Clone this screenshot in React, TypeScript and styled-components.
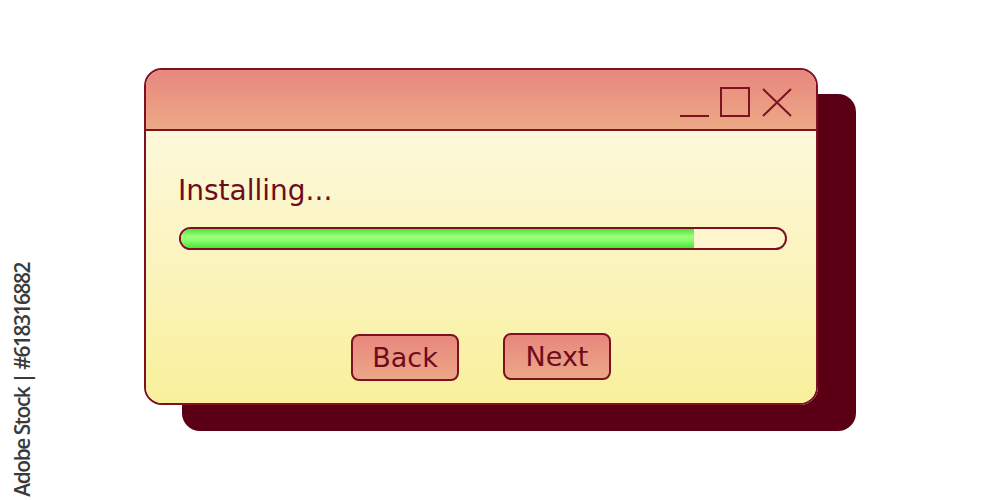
import styled, { createGlobalStyle } from "styled-components";

const GlobalStyle = createGlobalStyle`
  html, body {
    margin: 0;
    padding: 0;
    background: #ffffff;
    overflow: hidden;
  }
  body {
    font-family: "DejaVu Sans", Verdana, sans-serif;
  }
`;

const ink = "#6e0b1e";
const line = "#7d1122";

function App() {
  const progress = 85;

  return (
    <>
      <GlobalStyle />
      <Page>
        <Window>
          <TitleBar>
            <Controls>
              <ControlIcon viewBox="0 0 30 30" aria-label="minimize">
                <path d="M0 29 H29" />
              </ControlIcon>
              <ControlIcon viewBox="0 0 30 30" aria-label="maximize">
                <rect x="1" y="1" width="28" height="28" />
              </ControlIcon>
              <ControlIcon viewBox="0 0 30 30" aria-label="close" $wide>
                <path d="M1 2 L29 29 M29 2 L1 29" />
              </ControlIcon>
            </Controls>
          </TitleBar>
          <Body>
            <Label>Installing...</Label>
            <Track>
              <Fill style={{ width: `${progress}%` }} />
            </Track>
            <Buttons>
              <Button>Back</Button>
              <Button $raised>Next</Button>
            </Buttons>
          </Body>
        </Window>
      </Page>
      <Watermark>Adobe Stock | #618316882</Watermark>
    </>
  );
}

const Page = styled.div`
  padding: 68px 0 0 144px;
  height: 500px;
  box-sizing: border-box;
`;

const Window = styled.div`
  width: 674px;
  height: 337px;
  box-sizing: border-box;
  border: 2px solid ${line};
  border-radius: 18px;
  overflow: hidden;
  display: flex;
  flex-direction: column;
  box-shadow: 38px 26px 0 0 #5b0014;
`;

const TitleBar = styled.div`
  height: 61px;
  box-sizing: border-box;
  flex: none;
  border-bottom: 2px solid ${line};
  background: linear-gradient(180deg, #e8877e 0%, #eca986 100%);
  display: flex;
  justify-content: flex-end;
  align-items: flex-end;
  padding: 0 24px 12px 0;
`;

const Controls = styled.div`
  display: flex;
  align-items: flex-end;
  gap: 10px;
`;

const ControlIcon = styled.svg<{ $wide?: boolean }>`
  width: 30px;
  height: 30px;
  margin-left: ${(p) => (p.$wide ? "2px" : "0")};
  fill: none;
  stroke: ${line};
  stroke-width: 2;
`;

const Body = styled.div`
  flex: 1;
  display: flex;
  flex-direction: column;
  padding: 44px 29px 22px 33px;
  background: linear-gradient(180deg, #fdf8da 0%, #fbf4bd 50%, #f8f09b 100%);
`;

const Label = styled.div`
  font-size: 28px;
  color: ${ink};
  line-height: 32px;
  margin-left: -1px;
`;

const Track = styled.div`
  margin-top: 20px;
  height: 23px;
  box-sizing: border-box;
  border: 2px solid ${line};
  border-radius: 12px;
  background: #fdf6cd;
  overflow: hidden;
`;

const Fill = styled.div`
  height: 100%;
  background: linear-gradient(
    180deg,
    #4fe046 0%,
    #9cff78 40%,
    #84fb68 65%,
    #43e83a 100%
  );
`;

const Buttons = styled.div`
  margin: auto 0 0 -4px;
  display: flex;
  justify-content: center;
  align-items: flex-end;
  gap: 44px;
`;

const Button = styled.button<{ $raised?: boolean }>`
  width: 108px;
  height: 47px;
  margin-bottom: ${(p) => (p.$raised ? "1px" : "0")};
  box-sizing: border-box;
  border: 2px solid ${line};
  border-radius: 8px;
  background: linear-gradient(180deg, #e8877e 0%, #eca786 100%);
  color: ${ink};
  font-family: "DejaVu Sans", Verdana, sans-serif;
  font-size: 27px;
  padding: 0;
  cursor: pointer;
`;

const Watermark = styled.div`
  position: absolute;
  left: 8px;
  top: 263px;
  writing-mode: vertical-rl;
  transform: rotate(180deg);
  font-family: "Open Sans", sans-serif;
  font-weight: 600;
  font-size: 21px;
  letter-spacing: -1.5px;
  color: #3a3a3a;
  white-space: nowrap;
`;

export default App;
